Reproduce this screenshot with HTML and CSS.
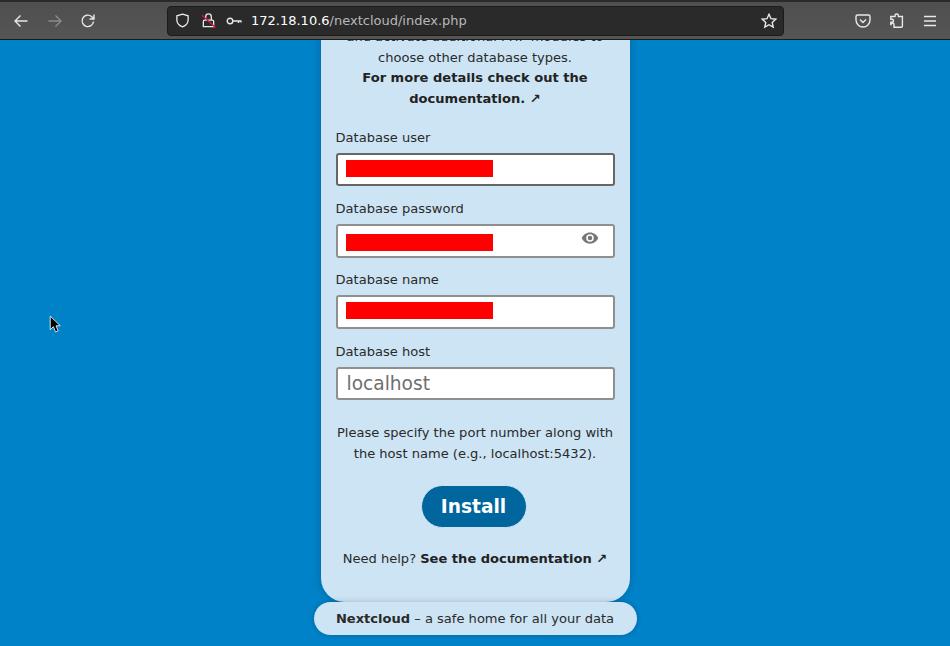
FILE: index.html
```html
<!DOCTYPE html>
<html lang="en">
<head>
<meta charset="utf-8">
<title>Nextcloud</title>
<link rel="stylesheet" href="styles.css">
</head>
<body>
<header class="toolbar">
  <div class="nav">
    <svg class="icon" viewBox="0 0 16 16"><path d="M14.500 8H2M7.500 2.500 2 8l5.500 5.500"/></svg>
    <svg class="icon dim" viewBox="0 0 16 16"><path d="M1.500 8H14M8.500 2.500 14 8l-5.500 5.500"/></svg>
    <svg class="icon" viewBox="0 0 16 16"><path d="M13.500 8.500A5.700 5.700 0 1 1 11.500 3.500L14 6M14 1.500V6H9.500"/></svg>
  </div>
  <div class="urlbar">
    <svg class="icon small" viewBox="0 0 16 16"><path d="M8 1.200 14 3v4.500c0 3.500-2.500 6-6 7.300-3.500-1.300-6-3.800-6-7.300V3z"/></svg>
    <svg class="icon small lock" viewBox="0 0 16 16"><path d="M2.500 9a1.500 1.500 0 0 1 1.500-1.500h8A1.500 1.500 0 0 1 13.500 9v5.500h-11zM5 7.500V4a3 3 0 0 1 6 0v3.500"/><path class="slash" d="M1 2.500 15.500 15.500"/></svg>
    <svg class="icon key" viewBox="0 0 16 16"><circle cx="4" cy="8" r="2.800"/><path d="M7 8h8.500M12.500 8v2M15 8v1.500"/></svg>
    <span class="url"><span class="host">172.18.10.6</span>/nextcloud/index.php</span>
    <svg class="icon star" viewBox="0 0 16 16"><path d="M8 1.300 10 5.700l4.800.5-3.600 3.200 1 4.700L8 11.700l-4.200 2.400 1-4.700L1.200 6.200 6 5.700z"/></svg>
  </div>
  <div class="tools">
    <svg class="icon" viewBox="0 0 16 16"><path d="M2.500 2h11A1.500 1.500 0 0 1 15 3.500V7a7 7 0 0 1-14 0V3.500A1.500 1.500 0 0 1 2.500 2zM5 6.500l3 3 3-3"/></svg>
    <svg class="icon" viewBox="0 0 16 16"><path d="M6 3.500V2.700a1.700 1.700 0 0 1 3.400 0v.8h4v9.800a1 1 0 0 1-1 1H5v-2.800a1.500 1.500 0 0 0-3 0H1.800V9.200h1.200a1.500 1.500 0 0 0 0-3H1.800V3.500z"/></svg>
    <svg class="icon" viewBox="0 0 16 16"><path d="M2 3.500h12M2 8h12M2 12.500h12"/></svg>
  </div>
</header>
<main class="page">
  <section class="card">
    <p class="intro">and activate additional PHP modules to choose other database types.<br><a class="bold" href="#">For more details check out the documentation. ↗</a></p>
    <div class="field">
      <label>Database user</label>
      <div class="input focus"><span class="redact up"></span></div>
    </div>
    <div class="field">
      <label>Database password</label>
      <div class="input"><span class="redact down"></span>
        <svg class="eye" viewBox="0 0 24 24"><path d="M12 4.500C7 4.500 2.700 7.600 1 12c1.700 4.400 6 7.500 11 7.500s9.300-3.100 11-7.500C21.300 7.600 17 4.500 12 4.500zM12 17a5 5 0 1 1 0-10 5 5 0 0 1 0 10zm0-8a3 3 0 1 0 0 6 3 3 0 0 0 0-6z"/></svg>
      </div>
    </div>
    <div class="field">
      <label>Database name</label>
      <div class="input"><span class="redact up"></span></div>
    </div>
    <div class="field">
      <label>Database host</label>
      <div class="input"><span class="placeholder">localhost</span></div>
    </div>
    <p class="hint">Please specify the port number along with the host name (e.g., localhost:5432).</p>
    <button class="install" type="button">Install</button>
    <p class="help">Need help? <a class="bold" href="#">See the documentation ↗</a></p>
  </section>
  <footer class="pill"><b>Nextcloud</b> – a safe home for all your data</footer>
  <svg class="cursor" viewBox="0 0 12 18"><path d="M1 1v13l3-3 2 5 2.500-1-2-4.800H10.500z"/></svg>
</main>
</body>
</html>
```
FILE: styles.css
```css
* { box-sizing: border-box; }
html, body { margin: 0; height: 100%; overflow: hidden; }
body {
  font-family: "DejaVu Sans", sans-serif;
  font-size: 13.05px;
  color: #2a2a2a;
  background: #0082c9;
  display: flex;
  flex-direction: column;
}
.toolbar {
  height: 40px;
  flex: none;
  display: flex;
  align-items: center;
  background: linear-gradient(#2b2a2a 0 2px, #4f4f4f 2px, #555 100%);
  border-bottom: 1px solid #1c1c1c;
  padding: 2px 0 0 13px;
}
.icon { width: 16px; height: 16px; fill: none; stroke: #e8e8e8; stroke-width: 1.4; flex: none; }
.icon.dim { stroke: #8c8c8c; }
.nav { display: flex; gap: 17.500px; width: 154px; }
.urlbar {
  width: 617px;
  height: 30px;
  display: flex;
  align-items: center;
  background: #2a2a2a;
  border: 1px solid #1b1b1b;
  border-radius: 4px;
  padding: 0 6px 0 7px;
  color: #b8b8b8;
  font-size: 13px;
}
.icon.lock { margin-left: 11px; }
.icon.key { margin-left: 10px; }
.icon.small { width: 15px; height: 15px; }
.slash { stroke: #e0123f; }
.url { margin-left: 9px; flex: 1; }
.host { color: #fff; }
.tools { display: flex; gap: 17.500px; margin-left: 71px; }
.page {
  flex: 1;
  min-height: 0;
  display: flex;
  flex-direction: column;
  align-items: center;
  justify-content: flex-end;
  padding-bottom: 11px;
  overflow: hidden;
}
.card {
  width: 309px;
  flex: none;
  padding: 0 15px 33px;
  background: #cde4f4;
  border-radius: 0 0 24px 24px;
  box-shadow: 0 0 10px rgba(0, 0, 0, 0.2);
  text-align: center;
}
.intro { margin: 0 0 19px; line-height: 20.400px; }
.bold { font-weight: 700; color: #222; text-decoration: none; }
.field { margin-bottom: 12.900px; text-align: left; }
.field label { display: block; line-height: 20px; margin-bottom: 5px; }
.input {
  height: 33.300px;
  display: flex;
  align-items: center;
  justify-content: space-between;
  background: #fff;
  border: 2px solid #8f8f8f;
  border-radius: 3px;
  padding: 0 15px 0 8px;
}
.input.focus { border-color: #666; }
.redact { width: 147px; height: 17px; background: #f00; }
.redact.up { margin-bottom: 3px; }
.redact.down { margin-top: 3px; }
.eye { width: 18px; height: 18px; fill: #777; margin: -6px -1px 0 0; }
.placeholder { font-size: 18.600px; color: #6f6f6f; padding-left: 1px; }
.hint { margin: 23.500px 0 0; line-height: 20.800px; }
.install {
  display: block;
  margin: 20px 0 0 85px;
  width: 106px;
  height: 43px;
  padding: 0;
  border: 1px solid #cde4f4;
  border-radius: 22px;
  background: #00669d;
  color: #fff;
  font: 700 18.600px "DejaVu Sans", sans-serif;
}
.help { margin: 20px 0 0; line-height: 21px; }
.pill {
  flex: none;
  width: 323px;
  height: 33px;
  line-height: 33px;
  text-align: center;
  background: #cde4f4;
  border-radius: 17px;
  box-shadow: 0 0 6px rgba(0, 0, 0, 0.2);
}
.cursor { position: absolute; left: 49px; top: 315px; width: 13px; height: 19px; fill: #000; stroke: #fff; stroke-width: 0.8; }
```
